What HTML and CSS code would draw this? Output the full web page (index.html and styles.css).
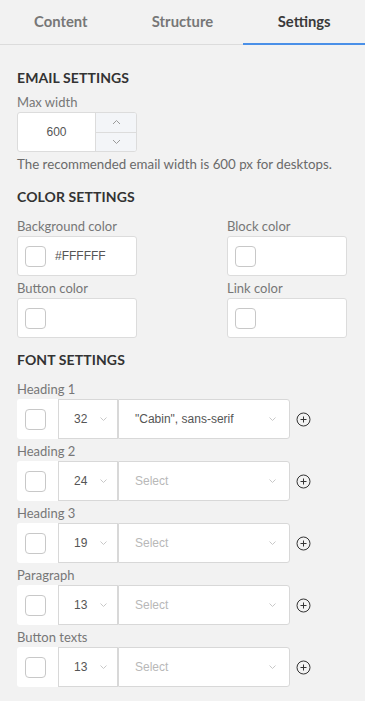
FILE: index.html
```html
<!DOCTYPE html>
<html>
<head>
<meta charset="utf-8">
<link rel="stylesheet" href="styles.css">
</head>
<body>
<nav class="tabs">
  <div class="tab">Content</div>
  <div class="tab">Structure</div>
  <div class="tab active">Settings</div>
</nav>
<main class="panel">
  <h2 class="section-title">EMAIL SETTINGS</h2>
  <div class="label">Max width</div>
  <div class="number">
    <div class="number-value">600</div>
    <div class="number-steps">
      <div class="step"><svg width="9" height="6" viewBox="0 0 9 6"><path d="M1 5L4.5 1.5L8 5" fill="none" stroke="#9a9a9a" stroke-width="1"/></svg></div>
      <div class="step"><svg width="9" height="6" viewBox="0 0 9 6"><path d="M1 1L4.5 4.5L8 1" fill="none" stroke="#9a9a9a" stroke-width="1"/></svg></div>
    </div>
  </div>
  <p class="hint">The recommended email width is 600 px for desktops.</p>

  <h2 class="section-title s2">COLOR SETTINGS</h2>
  <div class="color-grid">
    <div class="field">
      <div class="label">Background color</div>
      <div class="color-box"><span class="swatch"></span><span class="hex">#FFFFFF</span></div>
    </div>
    <div class="field">
      <div class="label">Block color</div>
      <div class="color-box"><span class="swatch"></span></div>
    </div>
    <div class="field">
      <div class="label">Button color</div>
      <div class="color-box"><span class="swatch"></span></div>
    </div>
    <div class="field">
      <div class="label">Link color</div>
      <div class="color-box"><span class="swatch"></span></div>
    </div>
  </div>

  <h2 class="section-title s3">FONT SETTINGS</h2>

  <div class="label">Heading 1</div>
  <div class="font-row">
    <div class="font-swatch"><span class="swatch"></span></div>
    <div class="sel size"><span>32</span><svg class="chev" width="7" height="4" viewBox="0 0 7 4"><path d="M0.5 0.5L3.5 3.5L6.5 0.5" fill="none" stroke="#c8c8c8"/></svg></div>
    <div class="sel family"><span class="val">"Cabin", sans-serif</span><svg class="chev" width="7" height="4" viewBox="0 0 7 4"><path d="M0.5 0.5L3.5 3.5L6.5 0.5" fill="none" stroke="#c8c8c8"/></svg></div>
    <svg class="plus" width="15" height="15" viewBox="0 0 15 15"><circle cx="7.5" cy="7.5" r="6.5" fill="none" stroke="#333" stroke-width="1"/><path d="M7.5 4.5v6M4.5 7.5h6" stroke="#333" stroke-width="1"/></svg>
  </div>

  <div class="label">Heading 2</div>
  <div class="font-row">
    <div class="font-swatch"><span class="swatch"></span></div>
    <div class="sel size"><span>24</span><svg class="chev" width="7" height="4" viewBox="0 0 7 4"><path d="M0.5 0.5L3.5 3.5L6.5 0.5" fill="none" stroke="#c8c8c8"/></svg></div>
    <div class="sel family"><span class="ph">Select</span><svg class="chev" width="7" height="4" viewBox="0 0 7 4"><path d="M0.5 0.5L3.5 3.5L6.5 0.5" fill="none" stroke="#c8c8c8"/></svg></div>
    <svg class="plus" width="15" height="15" viewBox="0 0 15 15"><circle cx="7.5" cy="7.5" r="6.5" fill="none" stroke="#333" stroke-width="1"/><path d="M7.5 4.5v6M4.5 7.5h6" stroke="#333" stroke-width="1"/></svg>
  </div>

  <div class="label">Heading 3</div>
  <div class="font-row">
    <div class="font-swatch"><span class="swatch"></span></div>
    <div class="sel size"><span>19</span><svg class="chev" width="7" height="4" viewBox="0 0 7 4"><path d="M0.5 0.5L3.5 3.5L6.5 0.5" fill="none" stroke="#c8c8c8"/></svg></div>
    <div class="sel family"><span class="ph">Select</span><svg class="chev" width="7" height="4" viewBox="0 0 7 4"><path d="M0.5 0.5L3.5 3.5L6.5 0.5" fill="none" stroke="#c8c8c8"/></svg></div>
    <svg class="plus" width="15" height="15" viewBox="0 0 15 15"><circle cx="7.5" cy="7.5" r="6.5" fill="none" stroke="#333" stroke-width="1"/><path d="M7.5 4.5v6M4.5 7.5h6" stroke="#333" stroke-width="1"/></svg>
  </div>

  <div class="label">Paragraph</div>
  <div class="font-row">
    <div class="font-swatch"><span class="swatch"></span></div>
    <div class="sel size"><span>13</span><svg class="chev" width="7" height="4" viewBox="0 0 7 4"><path d="M0.5 0.5L3.5 3.5L6.5 0.5" fill="none" stroke="#c8c8c8"/></svg></div>
    <div class="sel family"><span class="ph">Select</span><svg class="chev" width="7" height="4" viewBox="0 0 7 4"><path d="M0.5 0.5L3.5 3.5L6.5 0.5" fill="none" stroke="#c8c8c8"/></svg></div>
    <svg class="plus" width="15" height="15" viewBox="0 0 15 15"><circle cx="7.5" cy="7.5" r="6.5" fill="none" stroke="#333" stroke-width="1"/><path d="M7.5 4.5v6M4.5 7.5h6" stroke="#333" stroke-width="1"/></svg>
  </div>

  <div class="label">Button texts</div>
  <div class="font-row">
    <div class="font-swatch"><span class="swatch"></span></div>
    <div class="sel size"><span>13</span><svg class="chev" width="7" height="4" viewBox="0 0 7 4"><path d="M0.5 0.5L3.5 3.5L6.5 0.5" fill="none" stroke="#c8c8c8"/></svg></div>
    <div class="sel family"><span class="ph">Select</span><svg class="chev" width="7" height="4" viewBox="0 0 7 4"><path d="M0.5 0.5L3.5 3.5L6.5 0.5" fill="none" stroke="#c8c8c8"/></svg></div>
    <svg class="plus" width="15" height="15" viewBox="0 0 15 15"><circle cx="7.5" cy="7.5" r="6.5" fill="none" stroke="#333" stroke-width="1"/><path d="M7.5 4.5v6M4.5 7.5h6" stroke="#333" stroke-width="1"/></svg>
  </div>
</main>
</body>
</html>
```

FILE: styles.css
```css
* { box-sizing: border-box; }
html, body { margin: 0; padding: 0; }
body {
  background: #f2f2f2;
  font-family: Lato, "Open Sans", sans-serif;
  color: #333;
  width: 365px;
  height: 701px;
  overflow: hidden;
}
.tabs {
  display: flex;
  height: 45px;
  border-bottom: 1px solid #dcdcdc;
}
.tab {
  flex: 1;
  display: flex;
  align-items: center;
  justify-content: center;
  font-size: 14.8px;
  font-weight: 700;
  color: #777;
  padding-bottom: 3px;
}
.tab.active {
  color: #3a3a3a;
  border-bottom: 2px solid #4a90e8;
  margin-bottom: -1px;
  padding-bottom: 2px;
}
.panel {
  padding: 23px 18px 0 17px;
}
.section-title {
  margin: 0;
  font-size: 14px;
  line-height: 20px;
  font-weight: 700;
  color: #333;
  letter-spacing: 0.1px;
}
.section-title.s2 { margin-top: 13px; }
.section-title.s3 { margin-top: 12px; }
.label {
  font-size: 13px;
  line-height: 20px;
  padding-top: 2px;
  color: #777;
}
.section-title + .label { margin-top: 2px; }
.number {
  display: flex;
  width: 120px;
  height: 40px;
  border: 1px solid #dcdcdc;
  border-radius: 3px;
  background: #fff;
  overflow: hidden;
}
.number-value {
  width: 77px;
  display: flex;
  align-items: center;
  justify-content: center;
  font-family: "Liberation Sans", Arial, sans-serif;
  font-size: 12px;
  color: #555;
}
.number-steps {
  flex: 1;
  display: flex;
  flex-direction: column;
  border-left: 1px solid #dcdcdc;
  background: #f3f5f8;
}
.step {
  flex: 1;
  display: flex;
  align-items: center;
  justify-content: center;
}
.step + .step { border-top: 1px solid #dcdcdc; }
.hint {
  margin: 2px 0 0;
  font-size: 13.3px;
  line-height: 20px;
  color: #6a6a6a;
}
.color-grid {
  display: grid;
  grid-template-columns: 120px 120px;
  justify-content: space-between;
  margin-top: 7px;
}
.color-box {
  height: 40px;
  background: #fff;
  border: 1px solid #dcdcdc;
  border-radius: 3px;
  display: flex;
  align-items: center;
  padding-left: 7px;
}
.swatch {
  display: block;
  width: 21px;
  height: 21px;
  border: 1px solid #c8c8c8;
  border-radius: 4px;
  background: #fff;
}
.hex {
  margin-left: 9px;
  font-family: "Liberation Sans", Arial, sans-serif;
  font-size: 12px;
  color: #555;
}
.section-title.s3 + .label { margin-top: 7px; }
.font-row {
  display: flex;
  align-items: center;
  height: 40px;
}
.font-swatch {
  width: 41px;
  height: 40px;
  background: #fff;
  border-radius: 3px 0 0 3px;
  display: flex;
  align-items: center;
  padding-left: 8px;
}
.sel {
  height: 40px;
  background: #fff;
  border: 1px solid #d8d8d8;
  display: flex;
  align-items: center;
  font-family: "Liberation Sans", Arial, sans-serif;
  font-size: 12px;
  color: #555;
}
.sel.size {
  width: 60px;
  padding-left: 15px;
}
.sel.size .chev { margin-left: 13px; }
.sel.family {
  width: 172px;
  border-radius: 0 3px 3px 0;
  padding-left: 16px;
  padding-right: 13px;
  justify-content: space-between;
}
.sel .val { color: #555; }
.sel .ph { color: #b8b8b8; }
.plus {
  margin-left: 6px;
}
```
